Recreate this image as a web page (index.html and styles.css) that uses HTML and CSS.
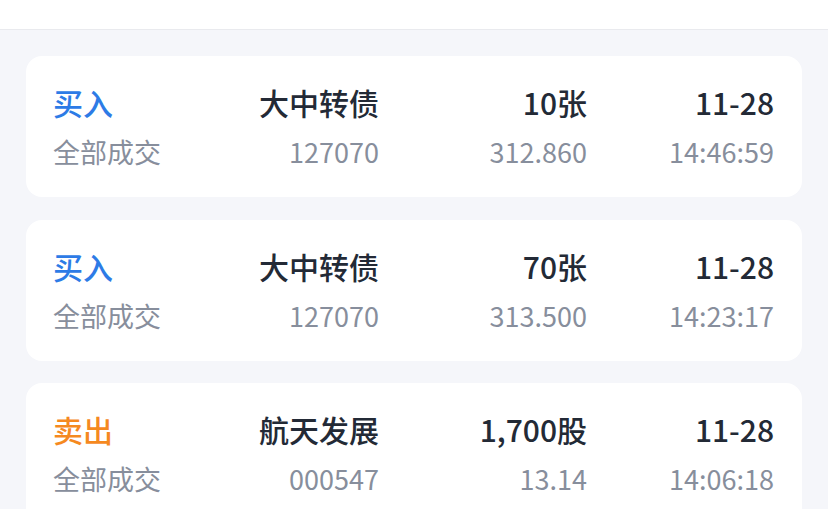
FILE: index.html
```html
<!DOCTYPE html>
<html lang="zh-CN">
<head>
<meta charset="utf-8">
<link rel="stylesheet" href="styles.css">
</head>
<body>
<div class="topbar"></div>
<div class="list">
  <div class="card">
    <div class="cell left"><div class="title buy">买入</div><div class="sub">全部成交</div></div>
    <div class="cell"><div class="title">大中转债</div><div class="sub">127070</div></div>
    <div class="cell"><div class="title">10张</div><div class="sub">312.860</div></div>
    <div class="cell"><div class="title">11-28</div><div class="sub">14:46:59</div></div>
  </div>
  <div class="card">
    <div class="cell left"><div class="title buy">买入</div><div class="sub">全部成交</div></div>
    <div class="cell"><div class="title">大中转债</div><div class="sub">127070</div></div>
    <div class="cell"><div class="title">70张</div><div class="sub">313.500</div></div>
    <div class="cell"><div class="title">11-28</div><div class="sub">14:23:17</div></div>
  </div>
  <div class="card">
    <div class="cell left"><div class="title sell">卖出</div><div class="sub">全部成交</div></div>
    <div class="cell"><div class="title">航天发展</div><div class="sub">000547</div></div>
    <div class="cell"><div class="title">1,700股</div><div class="sub">13.14</div></div>
    <div class="cell"><div class="title">11-28</div><div class="sub">14:06:18</div></div>
  </div>
</div>
</body>
</html>
```
FILE: styles.css
```css
html, body {
  margin: 0;
  padding: 0;
  background: #f5f6fa;
  font-family: "Noto Sans CJK SC", "Noto Sans", sans-serif;
  overflow: hidden;
}
.topbar {
  height: 29px;
  background: #ffffff;
  border-bottom: 1px solid #e9eaee;
}
.list {
  display: flex;
  flex-direction: column;
  gap: 22.5px;
  padding: 26px 26px 0 26px;
}
.card {
  background: #ffffff;
  border-radius: 16px;
  height: 141px;
  box-sizing: border-box;
  padding: 26px 28px 0 27px;
  display: grid;
  grid-template-columns: 147px 179px 208px 187px;
}
.cell {
  display: flex;
  flex-direction: column;
  align-items: flex-end;
}
.cell.left {
  align-items: flex-start;
}
.title {
  font-size: 30px;
  line-height: 40px;
  font-weight: 500;
  color: #232a36;
}
.title.buy { color: #2d7be6; }
.title.sell { color: #f5891f; }
.sub {
  margin-top: 12px;
  font-size: 27px;
  line-height: 36px;
  color: #878e9c;
}
```
